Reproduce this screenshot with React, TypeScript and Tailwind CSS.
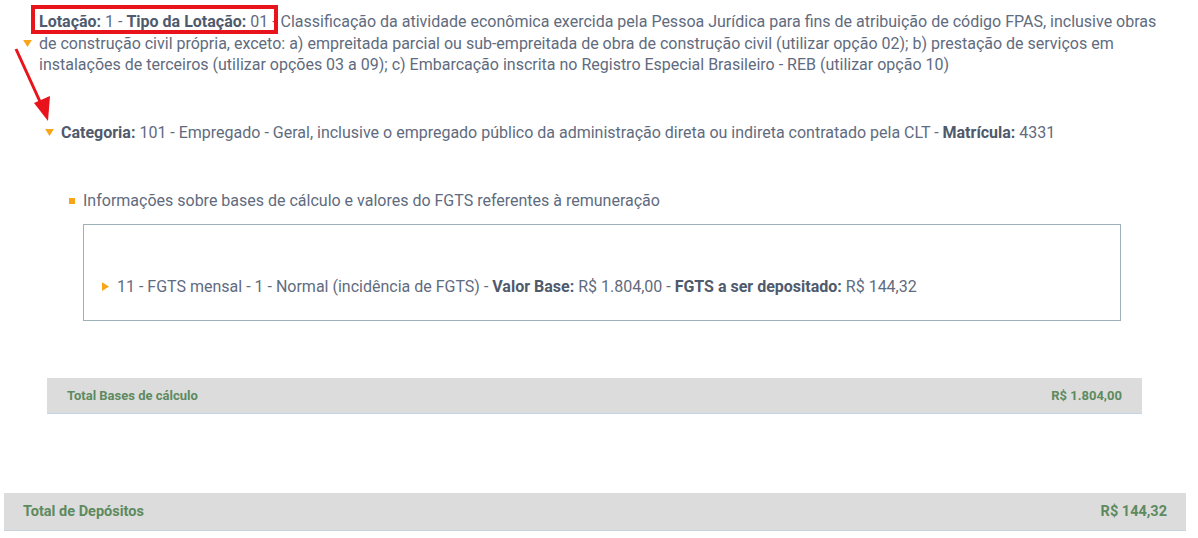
import React from "react";

function Down({ className = "" }: { className?: string }) {
  return (
    <svg viewBox="0 0 10 8" className={`h-[7px] w-[9px] shrink-0 ${className}`}>
      <polygon points="0,0 10,0 5,8" fill="#f9a51a" />
    </svg>
  );
}

function Right({ className = "" }: { className?: string }) {
  return (
    <svg viewBox="0 0 8 10" className={`h-[9px] w-[7px] shrink-0 ${className}`}>
      <polygon points="0,0 8,5 0,10" fill="#f9a51a" />
    </svg>
  );
}

function Label({ children }: { children: React.ReactNode }) {
  return <b className="font-bold text-[#4f5a6d]">{children}</b>;
}

export default function App() {
  return (
    <div
      className="relative min-h-[538px] w-[1198px] bg-white text-[16px] leading-[21.5px] text-[#5f6b7e]"
      style={{ fontFamily: "Roboto, 'Liberation Sans', sans-serif" }}
    >
      <div className="flex items-center gap-[7px] pl-[23px] pr-[30px] pt-[11px]">
        <Down />
        <p>
          <Label>Lotação:</Label> 1 - <Label>Tipo da Lotação:</Label> 01 - Classificação da atividade econômica
          exercida pela Pessoa Jurídica para fins de atribuição de código FPAS, inclusive obras de construção civil
          própria, exceto: a) empreitada parcial ou sub-empreitada de obra de construção civil (utilizar opção 02); b)
          prestação de serviços em instalações de terceiros (utilizar opções 03 a 09); c) Embarcação inscrita no
          Registro Especial Brasileiro - REB (utilizar opção 10)
        </p>
      </div>

      <div className="mt-[46px] flex items-center gap-[7px] pl-[45px]">
        <Down />
        <p>
          <Label>Categoria:</Label> 101 - Empregado - Geral, inclusive o empregado público da administração direta
          ou indireta contratado pela CLT - <Label>Matrícula:</Label> 4331
        </p>
      </div>

      <div className="mt-[47px] flex items-center gap-[8px] pl-[69px]">
        <span className="h-[6px] w-[6px] shrink-0 bg-[#f9a51a]" />
        <p>Informações sobre bases de cálculo e valores do FGTS referentes à remuneração</p>
      </div>

      <div className="ml-[83px] mt-[12px] h-[97px] w-[1038px] border border-[#9eb1bb] pt-[51px]">
        <div className="flex items-center gap-[8px] pl-[18px]">
          <Right />
          <p>
            11 - FGTS mensal - 1 - Normal (incidência de FGTS) - <Label>Valor Base:</Label> R$ 1.804,00 -{" "}
            <Label>FGTS a ser depositado:</Label> R$ 144,32
          </p>
        </div>
      </div>

      <div className="ml-[47px] mt-[57px] flex h-[36px] w-[1095px] items-center justify-between border-b border-[#c3d4e6] bg-[#dcdcdc] px-[20px] pt-[2px] text-[13px] font-bold text-[#5d8a5f]">
        <span>Total Bases de cálculo</span>
        <span>R$ 1.804,00</span>
      </div>

      <div className="ml-[4px] mt-[79px] flex h-[38px] w-[1182px] items-center justify-between border-b border-[#c9d3dc] bg-[#dcdcdc] px-[19px] pt-[2px] text-[14.5px] font-bold text-[#5d8a5f]">
        <span>Total de Depósitos</span>
        <span>R$ 144,32</span>
      </div>

      {/* annotation overlay */}
      <div className="pointer-events-none absolute left-[31px] top-[5px] h-[29px] w-[247px] border-[4px] border-[#e8131b]" />
      <svg className="pointer-events-none absolute left-0 top-0" width="80" height="130">
        <line x1="16" y1="49" x2="42" y2="106" stroke="#e8131b" strokeWidth="3" />
        <polygon points="34,103 50,96 48,121" fill="#e8131b" />
      </svg>
    </div>
  );
}
